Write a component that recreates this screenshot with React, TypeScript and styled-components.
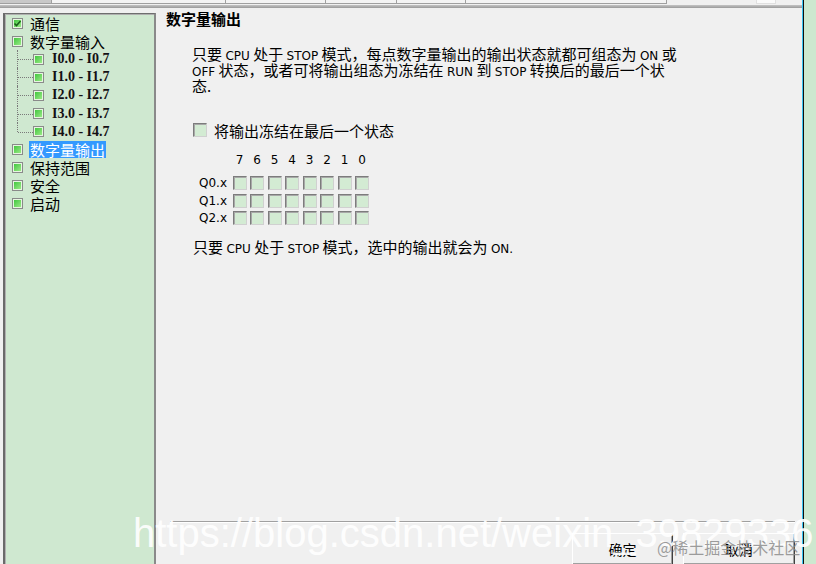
import React from 'react'
import styled, { createGlobalStyle } from 'styled-components'

const GlobalStyle = createGlobalStyle`
  html, body { margin: 0; padding: 0; background: #f0f0f0; overflow: hidden; }
  * { box-sizing: border-box; }
`

const CJK = `"Noto Sans CJK SC", "Noto Sans", sans-serif`
const UI = `"DejaVu Sans", "Noto Sans CJK SC", sans-serif`

// ─── Frame ─────────────────────────────────────────────────────────────────────
const Frame = styled.div`
  position: relative;
  width: 816px;
  height: 564px;
  display: flex;
  overflow: hidden;
  background: #f0f0f0;
  font-family: ${CJK};
  color: #000;
`

const Main = styled.div`
  width: 802px;
  display: flex;
  flex-direction: column;
`

const TopBar = styled.div`
  height: 8px;
  display: flex;
  flex-direction: column;
`

const HeaderRow = styled.div`
  height: 4px;
  display: flex;
  align-items: flex-end;
`

const HeaderCell = styled.div<{ $w: number; $dark?: boolean }>`
  width: ${p => p.$w}px;
  height: 4px;
  border-bottom: 1px solid #a0a0a0;
  border-right: 1px solid #a0a0a0;
  background: ${p => (p.$dark ? '#c8c8c8' : '#f4f4f4')};
`

const HeaderTab = styled.div`
  width: 20px;
  height: 4px;
  margin-left: 89px;
  border: 1px solid #e0e0e0;
  border-top: none;
  background: #fafafa;
`

const Separator = styled.div`
  height: 3px;
  margin-top: 1px;
  background: linear-gradient(#c4c4c4, #9a9a9a);
`

const Body = styled.div`
  flex: 1;
  display: flex;
  min-height: 0;
`

// ─── Tree ──────────────────────────────────────────────────────────────────────
const TreePanel = styled.div`
  width: 153px;
  margin: 5px 0 0 3px;
  background: #cfe8d0;
  border-top: 1px solid #6e6e6e;
  border-left: 2px solid #6a6a6a;
  border-right: 2px solid #8a8a8a;
  box-shadow: inset 1px 1px 0 #b0b0b0;
`

const TreeRow = styled.div`
  height: 18.1px;
  display: flex;
  align-items: center;
  padding-left: 7px;
`

const SubRow = styled(TreeRow)`
  padding-left: 12px;
`

const Connector = styled.span<{ $last?: boolean }>`
  position: relative;
  width: 16px;
  height: 18px;
  flex: none;

  &::before {
    content: '';
    position: absolute;
    left: 0;
    top: 0;
    height: ${p => (p.$last ? '9px' : '18px')};
    border-left: 1px dotted #7a7a7a;
  }

  &::after {
    content: '';
    position: absolute;
    left: 1px;
    right: 0;
    top: 9px;
    border-top: 1px dotted #7a7a7a;
  }
`

const NodeBox = styled.span`
  width: 11px;
  height: 11px;
  flex: none;
  display: flex;
  align-items: center;
  justify-content: center;
  border: 1px solid #8a8a8a;
  background: linear-gradient(135deg, #36c236, #a6ee90);
  box-shadow: inset 0 0 0 1px #e6f6e0;
`

const NodeLabel = styled.span<{ $selected?: boolean }>`
  margin-left: 6px;
  padding: 0 1px;
  height: 17px;
  line-height: 17px;
  font-size: 15px;
  white-space: nowrap;
  background: ${p => (p.$selected ? '#3399ff' : 'transparent')};
  color: ${p => (p.$selected ? '#fff' : '#000')};
`

const SubLabel = styled.span`
  margin-left: 8px;
  font-family: "Liberation Serif", serif;
  font-weight: 700;
  font-size: 14px;
  color: #141014;
  white-space: nowrap;
`

// ─── Content ───────────────────────────────────────────────────────────────────
const Content = styled.div`
  flex: 1;
  display: flex;
  flex-direction: column;
  padding-top: 2px;
`

const Title = styled.h1`
  margin: 0 0 0 10px;
  font-size: 15px;
  line-height: 18px;
  font-weight: 700;
`

const Para = styled.p`
  margin: 18px 0 0 36px;
  font-size: 15px;
  line-height: 16px;
  white-space: nowrap;
`

const Latin = styled.span`
  font-family: ${UI};
  font-size: 12px;
  line-height: 0;
`

const CheckRow = styled.label`
  display: flex;
  align-items: center;
  gap: 7px;
  height: 14px;
  margin: 29px 0 0 37px;
  font-size: 15px;
`

const Box = styled.span`
  width: 14px;
  height: 14px;
  flex: none;
  background: #d3ebd3;
  border: 1px solid;
  border-color: #7c7c7c #d0d0d0 #d0d0d0 #7c7c7c;
  box-shadow: inset 1px 1px 0 #a8a8a8;
`

const BitGrid = styled.div`
  display: grid;
  grid-template-columns: 30px repeat(8, 14px);
  column-gap: 3.5px;
  row-gap: 3.5px;
  margin: 15px 0 0 43px;
  align-items: center;
  font-family: ${UI};
  font-size: 12px;
`

const BitHead = styled.span`
  height: 16px;
  line-height: 16px;
  text-align: center;
  margin-bottom: 4.5px;
`

const RowLabel = styled.span`
  height: 14px;
  line-height: 14px;
`

const Note = styled.p`
  margin: 14px 0 0 37px;
  font-size: 15px;
  line-height: 16px;
  white-space: nowrap;
`

const Footer = styled.div`
  margin-top: auto;
  height: 43px;
  display: flex;
  flex-direction: column;
`

const Rule = styled.div`
  margin: 0 7px 0 14px;
  border-top: 1px solid #a0a0a0;
  border-bottom: 1px solid #fff;
`

const ButtonRow = styled.div`
  display: flex;
  gap: 10px;
  margin: 10px 7px 0 0;
  padding-left: 416px;
`

const Button = styled.button<{ $w: number }>`
  width: ${p => p.$w}px;
  height: 32px;
  flex: none;
  background: #f0f0f0;
  border: 1px solid;
  border-color: #fff #404040 #404040 #fff;
  box-shadow: inset -1px -1px 0 #a0a0a0;
  font-family: ${CJK};
  font-size: 14px;
  color: #000;
  padding: 0;
`

// ─── Right edge ────────────────────────────────────────────────────────────────
const EdgeLine = styled.div`
  width: 2px;
  border-left: 1px solid #38c4f4;
  border-right: 1px solid #101010;
`

const EdgeStrip = styled.div`
  flex: 1;
  background: #cde8cf;
`

// ─── Overlays ──────────────────────────────────────────────────────────────────
const Watermark = styled.div`
  position: absolute;
  left: 133px;
  top: 513px;
  font-family: "Liberation Sans", sans-serif;
  font-size: 40px;
  line-height: 40px;
  color: rgba(255, 255, 255, 0.92);
  white-space: nowrap;
  pointer-events: none;
`

const Credit = styled.div`
  position: absolute;
  left: 657px;
  top: 537px;
  font-family: ${CJK};
  font-size: 16px;
  line-height: 20px;
  color: rgba(140, 140, 140, 0.85);
  white-space: nowrap;
  pointer-events: none;
`

function Tick() {
  return (
    <svg width="9" height="9" viewBox="0 0 9 9">
      <path d="M1.5 4.5 L3.5 6.5 L7.5 2" fill="none" stroke="#1b5e1b" strokeWidth="1.6" />
    </svg>
  )
}

const inputs = ['I0.0 - I0.7', 'I1.0 - I1.7', 'I2.0 - I2.7', 'I3.0 - I3.7', 'I4.0 - I4.7']
const tail = ['保持范围', '安全', '启动']
const bits = [7, 6, 5, 4, 3, 2, 1, 0]
const rows = ['Q0.x', 'Q1.x', 'Q2.x']

export default function App() {
  return (
    <Frame>
      <GlobalStyle />
      <Main>
        <TopBar>
          <HeaderRow>
            <HeaderCell $w={52} $dark />
            <HeaderCell $w={174} />
            <HeaderCell $w={100} />
            <HeaderCell $w={71} />
            <HeaderCell $w={69} />
            <HeaderCell $w={201} />
            <HeaderTab />
          </HeaderRow>
          <Separator />
        </TopBar>
        <Body>
          <TreePanel>
            <TreeRow>
              <NodeBox><Tick /></NodeBox>
              <NodeLabel>通信</NodeLabel>
            </TreeRow>
            <TreeRow>
              <NodeBox />
              <NodeLabel>数字量输入</NodeLabel>
            </TreeRow>
            {inputs.map((t, i) => (
              <SubRow key={t}>
                <Connector $last={i === inputs.length - 1} />
                <NodeBox />
                <SubLabel>{t}</SubLabel>
              </SubRow>
            ))}
            <TreeRow>
              <NodeBox />
              <NodeLabel $selected>数字量输出</NodeLabel>
            </TreeRow>
            {tail.map(t => (
              <TreeRow key={t}>
                <NodeBox />
                <NodeLabel>{t}</NodeLabel>
              </TreeRow>
            ))}
          </TreePanel>
          <Content>
            <Title>数字量输出</Title>
            <Para>
              只要 <Latin>CPU</Latin> 处于 <Latin>STOP</Latin> 模式，每点数字量输出的输出状态就都可组态为 <Latin>ON</Latin> 或
              <br />
              <Latin>OFF</Latin> 状态，或者可将输出组态为冻结在 <Latin>RUN</Latin> 到 <Latin>STOP</Latin> 转换后的最后一个状
              <br />
              态.
            </Para>
            <CheckRow>
              <Box />
              将输出冻结在最后一个状态
            </CheckRow>
            <BitGrid>
              <span />
              {bits.map(b => (
                <BitHead key={b}>{b}</BitHead>
              ))}
              {rows.map(r => (
                <React.Fragment key={r}>
                  <RowLabel>{r}</RowLabel>
                  {bits.map(b => (
                    <Box key={b} />
                  ))}
                </React.Fragment>
              ))}
            </BitGrid>
            <Note>
              只要 <Latin>CPU</Latin> 处于 <Latin>STOP</Latin> 模式，选中的输出就会为 <Latin>ON.</Latin>
            </Note>
            <Footer>
              <Rule />
              <ButtonRow>
                <Button $w={101}>确定</Button>
                <Button $w={112}>取消</Button>
              </ButtonRow>
            </Footer>
          </Content>
        </Body>
      </Main>
      <EdgeLine />
      <EdgeStrip />
      <Watermark>https://blog.csdn.net/weixin_39829336</Watermark>
      <Credit>@稀土掘金技术社区</Credit>
    </Frame>
  )
}
